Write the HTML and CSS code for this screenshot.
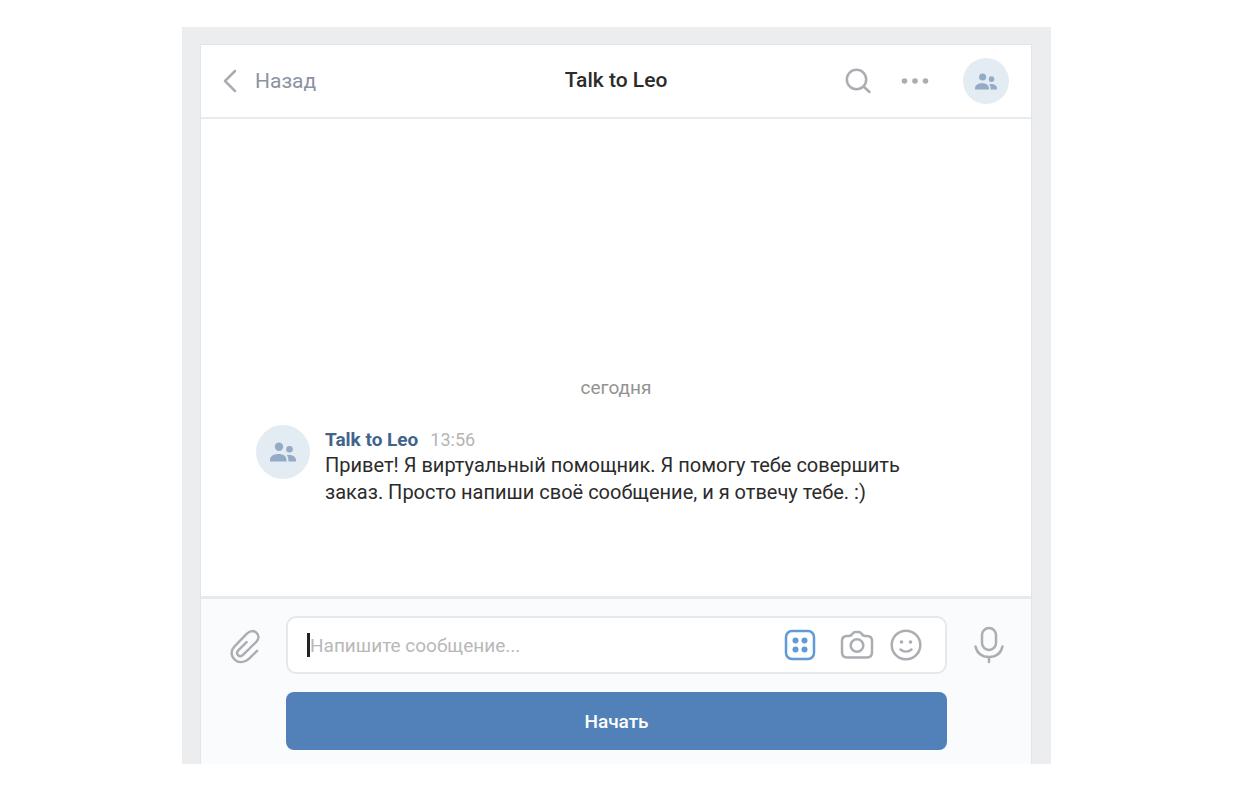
FILE: index.html
```
<!DOCTYPE html>
<html lang="ru">
<head>
    <meta charset="UTF-8">
    <meta name="viewport" content="width=device-width, initial-scale=1">
    <title>Talk to Leo</title>
    <link rel="stylesheet" href="styles.css">
</head>
<body>
    <div class="page">
        <main class="chat">
            <header class="chat-header">
                <a class="back" href="#">
                    <svg width="14" height="24" viewBox="0 0 14 24"><path d="M12 2 2 12l10 10"/></svg>
                    Назад
                </a>
                <h1>Talk to Leo</h1>
                <div class="header-actions">
                    <button class="icon-btn" type="button" aria-label="Поиск">
                        <svg width="26" height="26" viewBox="0 0 26 26"><circle cx="11.5" cy="11.5" r="9.7"/><path d="m18.5 18.5 6 5.5"/></svg>
                    </button>
                    <button class="icon-btn" type="button" aria-label="Ещё">
                        <svg class="dots" width="28" height="8" viewBox="0 0 28 8"><circle cx="3.5" cy="4" r="2.8"/><circle cx="14" cy="4" r="2.8"/><circle cx="24.5" cy="4" r="2.8"/></svg>
                    </button>
                    <a class="avatar avatar-small" href="#" aria-label="Talk to Leo">
                        <svg width="22" height="17" viewBox="0 0 26 20"><circle cx="9" cy="4.7" r="4.2"/><circle cx="19.5" cy="7.2" r="3.3"/><path d="M0 19.5v-1.500c0-4 4-6 8.500-6s8 2 8 6v1.500zM18.500 19.500c0-3-.5-4.800-1.700-6.300 4.500-.9 9.200 1 9.200 4.800v1.500z"/></svg>
                    </a>
                </div>
            </header>

            <section class="history">
                <div class="date">сегодня</div>
                <div class="message">
                    <a class="avatar" href="#" aria-label="Talk to Leo">
                        <svg width="26" height="20" viewBox="0 0 26 20"><circle cx="9" cy="4.7" r="4.2"/><circle cx="19.5" cy="7.2" r="3.3"/><path d="M0 19.5v-1.500c0-4 4-6 8.500-6s8 2 8 6v1.500zM18.500 19.500c0-3-.5-4.800-1.700-6.300 4.500-.9 9.200 1 9.200 4.800v1.500z"/></svg>
                    </a>
                    <div class="message-body">
                        <div class="message-info">
                            <a class="author" href="#">Talk to Leo</a>
                            <time class="time" datetime="13:56">13:56</time>
                        </div>
                        <p>Привет! Я виртуальный помощник. Я помогу тебе совершить заказ. Просто напиши своё сообщение, и я отвечу тебе. :)</p>
                    </div>
                </div>
            </section>

            <form class="composer">
                <button class="icon-btn attach" type="button" aria-label="Прикрепить">
                    <svg width="31" height="35" viewBox="0 0 32 36"><path d="m29 22.500-8.500 8.300c-4.600 4.300-10.800 4.400-14.600.7-4.200-4-4.300-9.500-.2-13.700L18.500 4.700c3.400-3.300 7.300-3.400 10-.8 2.700 2.700 2.600 6.400-.5 9.500L14.700 26.500c-1.900 1.900-4 1.900-5.400.5-1.400-1.500-1.300-3.500.5-5.300l8.400-8.200"/></svg>
                </button>
                <div class="field">
                    <span class="caret"></span>
                    <input type="text" aria-label="Сообщение" placeholder="Напишите сообщение...">
                    <button class="icon-btn keyboard" type="button" aria-label="Клавиатура бота">
                        <svg width="32" height="32" viewBox="0 0 32 32"><rect x="2" y="2" width="28" height="28" rx="6"/><g class="keys"><circle cx="11.5" cy="11.5" r="3"/><circle cx="20.5" cy="11.5" r="3"/><circle cx="11.5" cy="20.5" r="3"/><circle cx="20.5" cy="20.5" r="3"/></g></svg>
                    </button>
                    <button class="icon-btn" type="button" aria-label="Фото">
                        <svg width="34" height="32" viewBox="0 0 34 32"><path d="M7 7h2c1.800 0 2.500-1 3.400-2.100C13.300 3.500 14 3 15.500 3h3c1.500 0 2.200.5 3.100 1.900C22.500 6 23.200 7 25 7h2c3.500 0 5 1.700 5 5v11.300c0 3.500-1.600 5.200-5 5.200H7c-3.400 0-5-1.700-5-5.200V12c0-3.300 1.500-5 5-5z"/><circle cx="17" cy="16.5" r="6.3"/></svg>
                    </button>
                    <button class="icon-btn" type="button" aria-label="Смайлы">
                        <svg width="32" height="32" viewBox="0 0 32 32"><circle cx="16" cy="16" r="14.300"/><path d="M10.500 20.500c3.200 2.600 7.800 2.600 11 0"/><g class="eyes"><circle cx="11.500" cy="13" r="1.800"/><circle cx="20.500" cy="13" r="1.800"/></g></svg>
                    </button>
                </div>
                <button class="icon-btn" type="button" aria-label="Голосовое сообщение">
                    <svg width="30" height="38" viewBox="0 0 30 38"><rect x="8" y="2" width="14" height="22" rx="7"/><path d="M1.500 20.500C3 27 8 31 15 31s12-4 13.500-10.500M15 31v5"/></svg>
                </button>
                <button class="start" type="button">Начать</button>
            </form>
        </main>
    </div>
</body>
</html>
```
FILE: styles.css
```
* {
    box-sizing: border-box;
}
body {
    margin: 0;
    padding: 27px 190px 28px 182px;
    min-height: 100vh;
    display: flex;
    background-color: #fff;
    color: #2b2b2b;
    font-family: Roboto, sans-serif;
    font-size: 20px;
}
a {
    color: inherit;
    text-decoration: none;
}
svg {
    display: block;
    fill: none;
    stroke: currentColor;
    stroke-width: 2.5;
    stroke-linecap: round;
    stroke-linejoin: round;
}
.page {
    flex: 1;
    display: flex;
    padding: 17px 19px 0 18px;
    background-color: #ebedef;
}
.chat {
    flex: 1;
    display: flex;
    flex-direction: column;
    min-width: 0;
    border: 1px solid #e2e4e7;
    border-bottom: none;
    background-color: #fff;
}

/* Шапка */
.chat-header {
    display: grid;
    grid-template-columns: 1fr auto 1fr;
    align-items: center;
    height: 74px;
    padding: 0 22px;
    border-bottom: 2px solid #e9ebed;
}
.chat-header h1 {
    margin: 0;
    padding-bottom: 2px;
    font-size: 21px;
    font-weight: 500;
}
.back {
    display: flex;
    align-items: center;
    gap: 18px;
    color: #8a949f;
    font-size: 21px;
}
.back svg {
    color: #a8adb3;
}
.header-actions {
    display: flex;
    align-items: center;
    justify-content: flex-end;
    gap: 30px;
}
.icon-btn {
    padding: 0;
    border: none;
    background: none;
    color: #aaaeb3;
    cursor: pointer;
}
.dots,
.keys,
.eyes,
.avatar svg {
    fill: currentColor;
    stroke: none;
}
.avatar {
    display: flex;
    flex: none;
    align-items: center;
    justify-content: center;
    width: 54px;
    height: 54px;
    border-radius: 50%;
    background-color: #e3ebf3;
    color: #94abc6;
}
.avatar-small {
    width: 46px;
    height: 46px;
    margin-left: 4px;
}

/* Сообщения */
.history {
    flex: 1;
    display: flex;
    flex-direction: column;
    justify-content: flex-end;
    padding: 0 120px 90px 55px;
}
.date {
    margin: 0 -120px 24px -55px;
    color: #939393;
    font-size: 19px;
    line-height: 27px;
    text-align: center;
}
.message {
    display: flex;
    gap: 15px;
}
.message-info {
    display: flex;
    align-items: baseline;
    gap: 12px;
    padding-top: 3px;
    line-height: 24px;
}
.author {
    color: #42648b;
    font-size: 19px;
    font-weight: 700;
}
.time {
    color: #b5b5b5;
    font-size: 18px;
}
.message-body p {
    margin: 0;
    line-height: 27px;
}

/* Поле ввода */
.composer {
    display: grid;
    grid-template-columns: 85px 1fr 84px;
    align-items: center;
    justify-items: center;
    row-gap: 18px;
    padding: 17px 0 14px;
    border-top: 3px solid #e7e9ec;
    background-color: #fafbfc;
}
.attach {
    padding: 2px 0 0 2px;
}
.field {
    display: flex;
    align-items: center;
    justify-self: stretch;
    height: 58px;
    padding: 0 23px 0 19px;
    border: 2px solid #e6e8eb;
    border-radius: 10px;
    background-color: #fff;
}
.field .icon-btn {
    margin-left: 16px;
}
.field .keyboard {
    margin-right: 8px;
    color: #5f9bd8;
}
.caret {
    width: 3px;
    height: 24px;
    background-color: #222;
}
.field input {
    flex: 1;
    min-width: 0;
    padding: 0;
    border: none;
    outline: none;
    background: none;
    font: inherit;
    font-size: 19px;
}
.field input::placeholder {
    color: #b8b8b8;
}
.start {
    grid-column: 2;
    justify-self: stretch;
    height: 58px;
    border: none;
    border-radius: 8px;
    background-color: #5181b8;
    color: #fff;
    font: inherit;
    font-size: 19px;
    font-weight: 500;
    cursor: pointer;
}
```
